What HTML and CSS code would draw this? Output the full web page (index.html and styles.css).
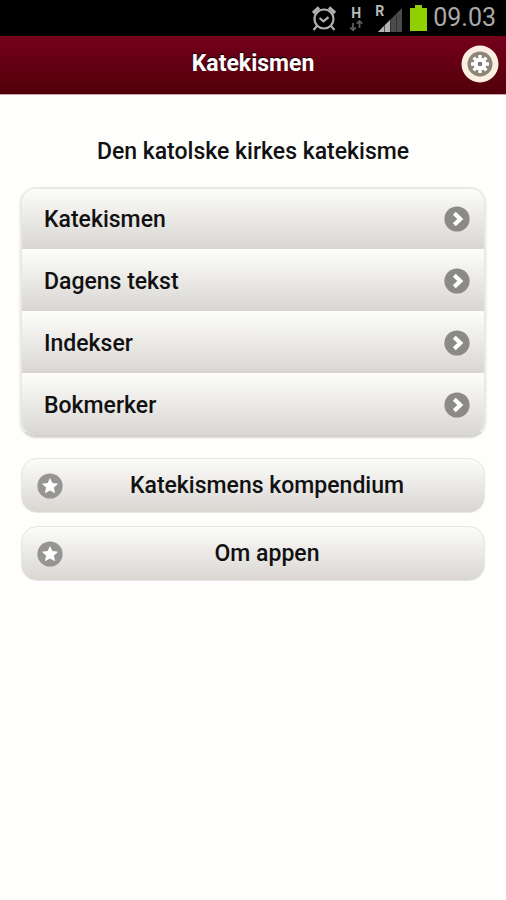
FILE: index.html
```html
<!DOCTYPE html>
<html lang="no">
<head>
<meta charset="utf-8">
<meta name="viewport" content="width=device-width, initial-scale=1">
<title>Katekismen</title>
<link rel="stylesheet" href="styles.css">
</head>
<body>
<svg class="defs" aria-hidden="true">
  <symbol id="chevron" viewBox="0 0 26 26">
    <circle cx="13" cy="13" r="12.6" fill="#8b8a87"/>
    <path d="M10.300 7.200 16.300 13l-6 5.800" fill="none" stroke="#fff" stroke-width="4.200"/>
  </symbol>
  <symbol id="star" viewBox="0 0 26 26">
    <circle cx="13" cy="13" r="12.600" fill="#969593"/>
    <path d="M13 5l2.400 5.100 5.800.6-4.300 3.900 1.200 5.700-5.100-2.900-5.100 2.900 1.200-5.700-4.300-3.900 5.800-.6z" fill="#fff"/>
  </symbol>
</svg>

<div class="status">
  <svg class="alarm" viewBox="0 0 26 28" fill="none" stroke="#b0b0b0" stroke-width="2.200">
    <circle cx="13" cy="15" r="9.500"/>
    <path d="M8.500 14l4 3.400 5-4.200M6 22l-3.500 4M20 22l3.500 4"/>
    <path d="M2 9 8 3.600M18 3.600 24 9" stroke-width="3.400"/>
  </svg>
  <div class="data">
    <span class="tag">H</span>
    <svg class="arrows" viewBox="0 0 14 11" fill="none" stroke="#5c5c5c" stroke-width="1.800">
      <path d="M4 3v7M1.200 7.500 4 10.200l2.800-2.700M10.500 8V1M7.700 3.700l2.800-2.700 2.800 2.700"/>
    </svg>
  </div>
  <div class="signal">
    <span class="tag">R</span>
    <svg class="bars" viewBox="0 0 24 24">
      <path d="M24 0v24H0z" fill="#4b4b4b"/>
      <path d="M12 12v12H0z" fill="#b4b4b4"/>
      <path d="M6.500 17v7" stroke="#555"/>
      <path d="M12.500 11v13M18.500 5v19" stroke="#333"/>
    </svg>
  </div>
  <svg class="battery" viewBox="0 0 17 26"><path d="M5 0h7v3h5v23H0V3h5z" fill="#92cf00"/></svg>
  <time class="clock">09.03</time>
</div>

<header class="bar">
  <h1 class="title">Katekismen</h1>
  <button class="settings" type="button" aria-label="Innstillinger">
    <svg viewBox="0 0 38 38">
      <circle cx="19" cy="19" r="18.500" fill="#fbeee2"/>
      <circle cx="19" cy="19" r="12.500" fill="#8d8577"/>
      <circle cx="19" cy="19" r="6.500" fill="#fff"/>
      <path d="M19 10v18M10 19h18M12.600 12.600l12.800 12.800M25.400 12.600 12.600 25.400" stroke="#fff" stroke-width="3.400"/>
      <circle cx="19" cy="19" r="2.300" fill="#777"/>
    </svg>
  </button>
</header>

<main class="content">
  <h2 class="heading">Den katolske kirkes katekisme</h2>
  <nav>
    <ul class="list">
      <li><a class="row" href="#katekismen">Katekismen<svg class="icon"><use href="#chevron"/></svg></a></li>
      <li><a class="row" href="#dagens-tekst">Dagens tekst<svg class="icon"><use href="#chevron"/></svg></a></li>
      <li><a class="row" href="#indekser">Indekser<svg class="icon"><use href="#chevron"/></svg></a></li>
      <li><a class="row" href="#bokmerker">Bokmerker<svg class="icon"><use href="#chevron"/></svg></a></li>
    </ul>
  </nav>
  <div class="actions">
    <button class="action" type="button"><svg class="icon"><use href="#star"/></svg><span>Katekismens kompendium</span></button>
    <button class="action" type="button"><svg class="icon"><use href="#star"/></svg><span>Om appen</span></button>
  </div>
</main>
</body>
</html>
```

FILE: styles.css
```css
* {
  box-sizing: border-box;
}

body {
  margin: 0;
  background: #fefefc;
  color: #111;
  font-family: Roboto, "Liberation Sans", sans-serif;
}

.defs {
  position: absolute;
  width: 0;
  height: 0;
}

.status {
  display: flex;
  align-items: center;
  justify-content: flex-end;
  height: 36px;
  padding: 0 10px;
  background: #000;
}

.alarm {
  width: 26px;
  height: 28px;
  margin-right: 12px;
}

.data {
  display: flex;
  flex-direction: column;
  align-items: center;
  width: 14px;
  margin-right: 12px;
}

.tag {
  color: #b8b8b8;
  font-size: 14px;
  font-weight: 700;
  line-height: 14px;
}

.arrows {
  width: 14px;
  height: 11px;
}

.signal {
  display: flex;
  align-items: flex-start;
  width: 28px;
  height: 28px;
  margin-right: 7px;
}

.bars {
  flex: none;
  width: 24px;
  height: 24px;
  margin: 4px 0 0 -6px;
}

.battery {
  width: 17px;
  height: 26px;
  margin-right: 6px;
}

.clock {
  color: #a9a9a9;
  font-size: 25px;
  line-height: 36px;
}

.bar {
  display: grid;
  grid-template-columns: 38px 1fr 38px;
  align-items: center;
  height: 59px;
  padding: 0 7px 2px;
  background: linear-gradient(#75001b, #52000b);
  border-bottom: 1px solid #c9a5aa;
}

.title {
  grid-column: 2;
  margin: 0;
  color: #fff;
  font-size: 23px;
  font-weight: 700;
  line-height: 30px;
  text-align: center;
  text-shadow: 0 -1px 1px #000;
}

.settings {
  width: 38px;
  height: 38px;
  padding: 0;
  border: 0;
  border-radius: 50%;
  background: none;
}

.settings svg {
  display: block;
}

.content {
  padding: 42px 20px;
}

.heading {
  margin: 0 0 20px;
  font-size: 23px;
  font-weight: 500;
  line-height: 30px;
  text-align: center;
}

.list {
  margin: 0;
  padding: 0;
  overflow: hidden;
  border: 2px solid #e9e9e7;
  border-bottom-color: #d3d2cf;
  border-radius: 16px;
  list-style: none;
  box-shadow: 0 1px 2px #d8d8d6;
}

.row {
  display: flex;
  align-items: center;
  justify-content: space-between;
  height: 60px;
  padding: 0 14px 0 22px;
  background: linear-gradient(#fcfcfa, #d9d6d2);
  color: #111;
  font-size: 23px;
  font-weight: 500;
  text-decoration: none;
}

.list li + li {
  border-top: 2px solid #fefdfa;
}

.icon {
  flex: none;
  width: 26px;
  height: 26px;
}

.actions {
  display: grid;
  gap: 13px;
  padding: 21px 1px 0;
}

.action {
  display: grid;
  grid-template-columns: 26px 1fr;
  align-items: center;
  height: 55px;
  padding: 0 13px 0 15px;
  border: 1px solid #e6e5e2;
  border-radius: 16px;
  background: linear-gradient(#fcfcfa, #d9d6d2);
  color: #111;
  font: 500 23px Roboto, "Liberation Sans", sans-serif;
}
```
